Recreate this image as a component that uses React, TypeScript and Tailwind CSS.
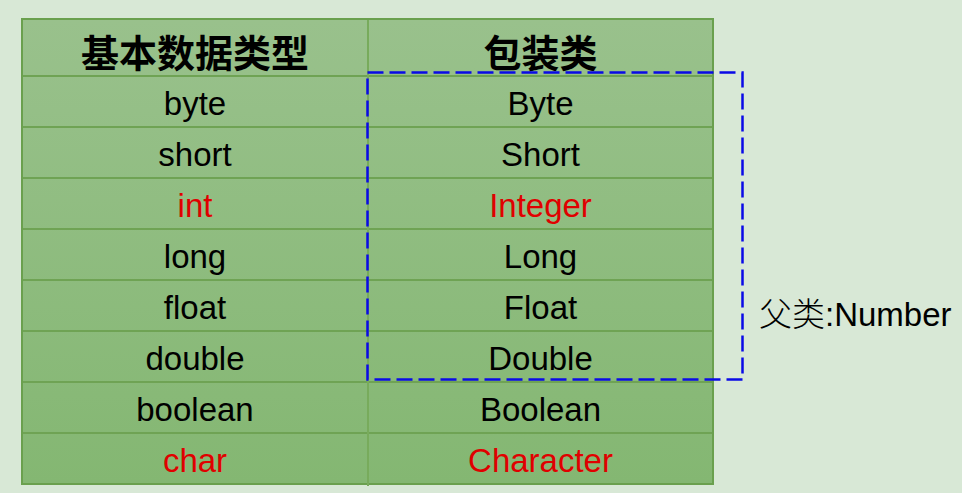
const rows = [
  { prim: 'byte', wrap: 'Byte' },
  { prim: 'short', wrap: 'Short' },
  { prim: 'int', wrap: 'Integer', red: true },
  { prim: 'long', wrap: 'Long' },
  { prim: 'float', wrap: 'Float' },
  { prim: 'double', wrap: 'Double' },
  { prim: 'boolean', wrap: 'Boolean' },
  { prim: 'char', wrap: 'Character', red: true },
];

export default function App() {
  return (
    <div className="relative w-[962px] h-[493px] bg-[#d8e8d6] overflow-hidden font-['Liberation_Sans',Arial,sans-serif]">
      <div className="flex items-start pt-[18px] pl-[21px]">
        <div className="w-[693px] border-2 border-[#6aa04e] bg-gradient-to-b from-[#99c18c] to-[#84b772]">
          <div className="grid grid-cols-[346px_1fr] h-[55px] font-bold text-[38px] text-black font-['Noto_Sans_CJK_SC',sans-serif]">
            <div className="flex items-center justify-center border-r-2 border-[#78ab5c] pt-[2px]">基本数据类型</div>
            <div className="flex items-center justify-center pt-[2px]">包装类</div>
          </div>
          {rows.map((r) => (
            <div
              key={r.prim}
              className={`grid grid-cols-[346px_1fr] h-[51px] border-t-2 border-[#6fa354] text-[33px] ${r.red ? 'text-[#e00000]' : 'text-black'}`}
            >
              <div className="flex items-center justify-center border-r-2 border-[#78ab5c] pt-[2px]">{r.prim}</div>
              <div className="flex items-center justify-center pt-[2px]">{r.wrap}</div>
            </div>
          ))}
        </div>
        <div className="pt-[278px] pl-[45px] text-[33px] text-black leading-none whitespace-nowrap">
          <span className="font-['Noto_Sans_CJK_SC',serif] font-light">父类</span>:Number
        </div>
      </div>
      <svg className="absolute left-[366px] top-[71px]" width="380" height="310">
        <rect x="1.5" y="1.5" width="375" height="307" fill="none" stroke="#0a0ae6" strokeWidth="2.5" strokeDasharray="16 6" />
      </svg>
    </div>
  );
}
